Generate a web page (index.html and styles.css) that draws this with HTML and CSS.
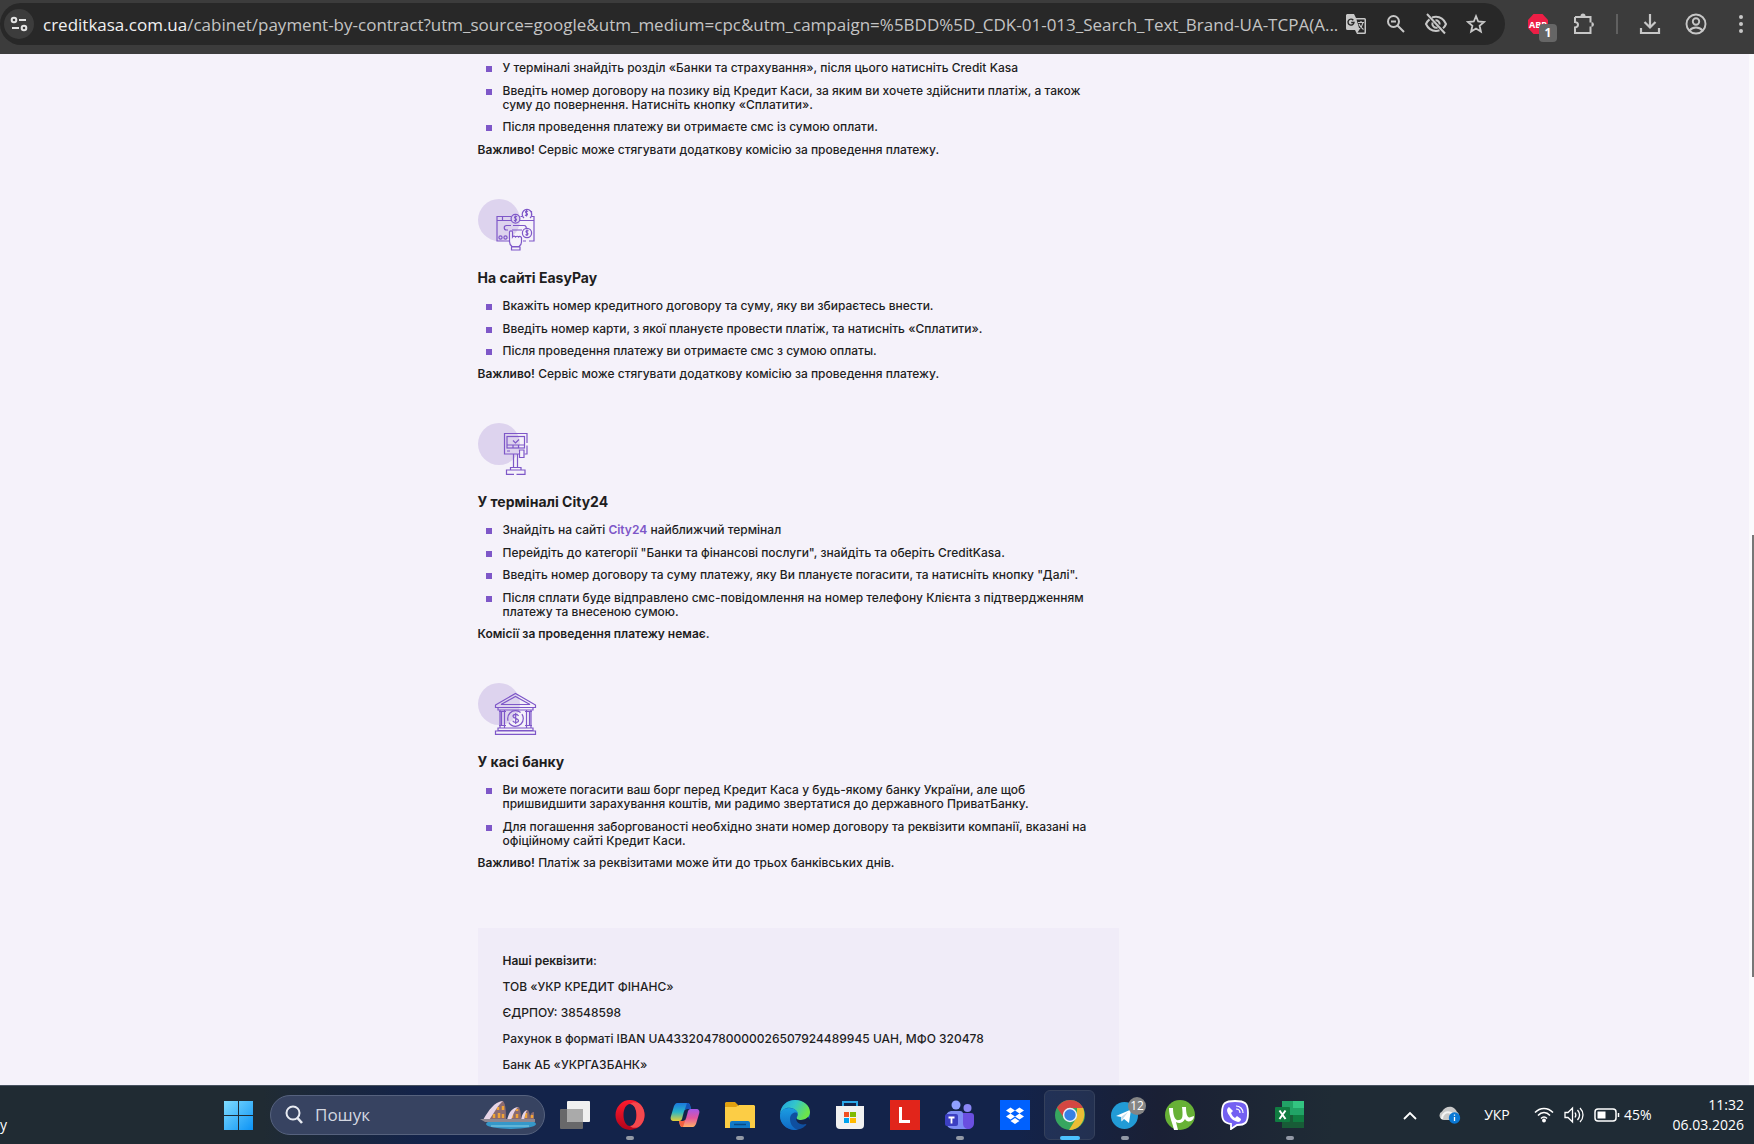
FILE: index.html
```html
<!DOCTYPE html>
<html lang="uk">
<head>
<meta charset="utf-8">
<title>CreditKasa</title>
<link rel="stylesheet" href="styles.css">
</head>
<body>
<div class="screen">
  <header class="toolbar">
    <div class="omnibox">
      <button class="site-info" aria-label="Інформація про сайт">
        <svg width="18" height="18" viewBox="0 0 18 18" fill="none" stroke="#e3e3e3" stroke-width="2"><circle cx="4" cy="5" r="2.3"/><path d="M9 5h7M2 13h7"/><circle cx="14" cy="13" r="2.3"/></svg>
      </button>
      <div class="url" role="textbox" aria-label="Адреса" tabindex="0"><span class="url-host">creditkasa.com.ua</span>/cabinet/payment-by-contract?utm_source=google&amp;utm_medium=cpc&amp;utm_campaign=%5BDD%5D_CDK-01-013_Search_Text_Brand-UA-TCPA(A...</div>
      <div class="omni-actions">
        <button class="omni-btn" aria-label="Перекласти">
          <svg width="22" height="22" viewBox="0 0 22 22"><path d="M2 1h7l2 4h8.500a1.500 1.500 0 0 1 1.500 1.500v13a1.500 1.500 0 0 1-1.500 1.500H12l-2-4H2.500A1.500 1.500 0 0 1 1 15.500V2z" fill="#c7c7c7"/><path d="M11.500 6.500h8v13h-7l2-3z" fill="#282828"/><path d="M13 9.500h6M16 8v1.500M18 9.500c-.5 3-2 5-4 6.500M14 11c1 2.500 2.500 4 4.500 5.500" stroke="#c7c7c7" stroke-width="1.200" fill="none"/><path d="M8.300 7.200A3 3 0 1 0 9 9.500H6.200" stroke="#282828" stroke-width="1.400" fill="none"/></svg>
        </button>
        <button class="omni-btn" aria-label="Масштаб">
          <svg width="20" height="20" viewBox="0 0 20 20" fill="none" stroke="#c7c7c7" stroke-width="2"><circle cx="7.500" cy="7.500" r="5.500"/><path d="M11.500 11.500 18 18M5 7.500h5"/></svg>
        </button>
        <button class="omni-btn" aria-label="Сторонні файли cookie">
          <svg width="24" height="22" viewBox="0 0 24 22" fill="none" stroke="#c7c7c7" stroke-width="2"><path d="M8 4.400C9.300 4 10.600 3.800 12 3.800c4.500 0 8 2.700 10 7.200-.7 1.700-1.700 3.100-3 4.200M15.500 17.300c-1.100.4-2.300.6-3.500.6-4.500 0-8-2.500-10-6.900.8-1.900 2-3.400 3.500-4.600M8.500 9.500a4 4 0 0 0 5 5M11.500 7.300a4 4 0 0 1 4.200 4.200M3 1l18 19.500"/></svg>
        </button>
        <button class="omni-btn" aria-label="Додати закладку">
          <svg width="20" height="20" viewBox="0 0 20 20" fill="none" stroke="#c7c7c7" stroke-width="1.800"><path d="m10 2.200 2.200 5.300 5.800.5-4.400 3.800 1.300 5.700-4.900-3-4.900 3 1.300-5.700L2 8l5.800-.5z"/></svg>
        </button>
      </div>
    </div>
    <div class="actions">
      <button class="action" aria-label="Adblock Plus">
        <svg width="22" height="22" viewBox="0 0 22 22"><path d="M6.500 1h9L21 7v8l-5.500 6h-9L1 15V7z" fill="#ed1e45"/><text x="11" y="14.500" text-anchor="middle" class="abp">ABP</text></svg>
        <span class="badge">1</span>
      </button>
      <button class="action" aria-label="Розширення">
        <svg width="22" height="22" viewBox="0 0 22 22" fill="none" stroke="#c7c7c7" stroke-width="2"><path d="M2 4h15.500v5.500M17.500 13.500V20H2v-5.500c4-.5 4-5 0-5.500V4"/><path d="M7.500 3a2.500 2.500 0 0 1 5 0zM18.500 9a2.500 2.500 0 0 1 0 5z" fill="#c7c7c7" stroke="none"/></svg>
      </button>
      <span class="divider"></span>
      <button class="action" aria-label="Завантаження">
        <svg width="22" height="22" viewBox="0 0 22 22" fill="none" stroke="#c7c7c7" stroke-width="2.200"><path d="M11 1v13M5.500 9l5.500 5.500L16.500 9M2 15v5h18v-5"/></svg>
      </button>
      <button class="action" aria-label="Профіль">
        <svg width="22" height="22" viewBox="0 0 22 22" fill="none" stroke="#c7c7c7" stroke-width="1.900"><circle cx="11" cy="11" r="9.500"/><circle cx="11" cy="8.500" r="3.200"/><path d="M4.500 17.500c3.500-4 9.500-4 13 0"/></svg>
      </button>
      <button class="action action-menu" aria-label="Меню">
        <svg width="6" height="20" viewBox="0 0 6 20" fill="#c7c7c7"><circle cx="3" cy="3" r="2"/><circle cx="3" cy="10" r="2"/><circle cx="3" cy="17" r="2"/></svg>
      </button>
    </div>
  </header>

  <div class="viewport">
    <main class="page">
      <div class="content">
        <section class="method">
          <ul class="steps">
            <li>У терміналі знайдіть розділ «Банки та страхування», після цього натисніть Credit Kasa</li>
            <li>Введіть номер договору на позику від Кредит Каси, за яким ви хочете здійснити платіж, а також<br>суму до повернення. Натисніть кнопку «Сплатити».</li>
            <li>Після проведення платежу ви отримаєте смс із сумою оплати.</li>
          </ul>
          <p class="note"><strong>Важливо!</strong> Сервіс може стягувати додаткову комісію за проведення платежу.</p>
        </section>

        <section class="method">
          <svg class="method-icon" width="60" height="52" viewBox="0 0 60 52"><circle cx="21" cy="21" r="21" fill="#ddd3ee"/><g fill="none" stroke="#7e57c8" stroke-width="1.200"><path d="M32 42H19V17.500h14M42.500 17.500h1.500M54 17.500h2V42h-5M48 42h-3M19 21.500h14M42 21.500h14M24.500 17.500v4M30 31h-1.500a2 2 0 0 1 0-4.500H33M35 26.500h11c2 0 2.500 2 2 3M34 31h10"/><circle cx="22.500" cy="38.500" r="1.600"/><circle cx="27.500" cy="38.500" r="1.600"/><circle cx="37.500" cy="19.700" r="4.400"/><path d="M46 19a4.800 4.800 0 1 1 6 0M53.500 12v5.500"/><circle cx="49" cy="34" r="4.600"/><path d="M34 47.500c-2-1.500-2.500-3-2.500-5V33c0-1.500 3-1.500 3 0v5c1-1.500 2.500-1 3 0 1-1 2.500-1 3 0 1-1 3-.5 3 1v4c0 2-1 3.500-2.500 4.500zM33.500 51v-3h8.500v3z" fill="#f5f2fa"/><path d="M39 17.800c-2-1.500-3.500.8-1.500 1.700s.5 3-1.500 1.800M37.500 16.500v6.500M50 12.500c-2-1.500-3.500.8-1.500 1.700s.5 3-1.500 1.800M48.500 11v6.500M50.500 32c-2-1.500-3.500.8-1.500 1.700s.5 3-1.500 1.800M49 30.500V37"/></g></svg>
          <h2>На сайті EasyPay</h2>
          <ul class="steps">
            <li>Вкажіть номер кредитного договору та суму, яку ви збираєтесь внести.</li>
            <li>Введіть номер карти, з якої плануєте провести платіж, та натисніть «Сплатити».</li>
            <li>Після проведення платежу ви отримаєте смс з сумою оплаты.</li>
          </ul>
          <p class="note"><strong>Важливо!</strong> Сервіс може стягувати додаткову комісію за проведення платежу.</p>
        </section>

        <section class="method">
          <svg class="method-icon" width="60" height="52" viewBox="0 0 60 52"><circle cx="21" cy="21" r="21" fill="#ddd3ee"/><g fill="none" stroke="#7e57c8" stroke-width="1.200"><path d="M41 31H26.500V10.500h22.500V20M49 22.500V31h-2.500"/><rect x="29" y="13.500" width="17.500" height="11.500"/><path d="M29 22h17.500M35 22v3M40.500 22v3M35 17.500l2.500 2.500 3.500-3.500M29 28h3"/><path d="M41.500 27h4.500v7.500h-4.500zM35.500 31v13.500M39.500 31v13.500M32.500 47v-2.500h10.500V47M36 51.300h-7.500V47H47v4.300h-8.500"/></g></svg>
          <h2>У терміналі City24</h2>
          <ul class="steps">
            <li>Знайдіть на сайті <a href="#">City24</a> найближчий термінал</li>
            <li>Перейдіть до категорії "Банки та фінансові послуги", знайдіть та оберіть CreditKasa.</li>
            <li>Введіть номер договору та суму платежу, яку Ви плануєте погасити, та натисніть кнопку "Далі".</li>
            <li>Після сплати буде відправлено смс-повідомлення на номер телефону Клієнта з підтвердженням<br>платежу та внесеною сумою.</li>
          </ul>
          <p class="note"><strong>Комісії за проведення платежу немає.</strong></p>
        </section>

        <section class="method">
          <svg class="method-icon" width="60" height="52" viewBox="0 0 60 52"><circle cx="21" cy="21" r="21" fill="#ddd3ee"/><g fill="none" stroke="#7e57c8" stroke-width="1.200"><path d="M17.500 22 37.500 10.500 57.500 22v2.500h-40zM23 21.500l14.500-8 14.500 8zM20 24.500h35v2.500H20zM22 27v18M23.500 29v13M26.500 27v18M48.500 27v18M51.500 29v13M53 27v18M21 42.500h7M47 42.500h7M21 28.500h7M47 28.500h7M20 45h35v2.500H20zM17.500 48h40v3.300h-40z"/><circle cx="37.500" cy="35.500" r="7.800" stroke-dasharray="20 2"/><path d="M40.500 33c-1-2.500-5.500-2-5.500.3s5.500 1.800 5.500 4.200-4.500 2.800-5.800.3M37.700 30v11"/></g></svg>
          <h2>У касі банку</h2>
          <ul class="steps">
            <li>Ви можете погасити ваш борг перед Кредит Каса у будь-якому банку України, але щоб<br>пришвидшити зарахування коштів, ми радимо звертатися до державного ПриватБанку.</li>
            <li>Для погашення заборгованості необхідно знати номер договору та реквізити компанії, вказані на<br>офіційному сайті Кредит Каси.</li>
          </ul>
          <p class="note"><strong>Важливо!</strong> Платіж за реквізитами може йти до трьох банківських днів.</p>
        </section>

        <section class="requisites">
          <p><strong>Наші реквізити:</strong></p>
          <p>ТОВ «УКР КРЕДИТ ФІНАНС»</p>
          <p>ЄДРПОУ: 38548598</p>
          <p>Рахунок в форматі IBAN UA433204780000026507924489945 UAH, МФО 320478</p>
          <p>Банк АБ «УКРГАЗБАНК»</p>
        </section>
      </div>
    </main>
    <div class="scrollbar"><span class="thumb"></span></div>
  </div>

  <footer class="taskbar">
    <span class="widget-text">у</span>
    <nav class="apps">
      <button class="start" aria-label="Пуск">
        <svg width="29" height="29" viewBox="0 0 29 29"><defs><linearGradient id="win" x1="0" y1="0" x2="1" y2="1"><stop offset="0" stop-color="#7fdcff"/><stop offset="1" stop-color="#0c93f5"/></linearGradient></defs><path d="M0 0h14v14H0zM15 0h14v14H15zM0 15h14v14H0zM15 15h14v14H15z" fill="url(#win)"/></svg>
      </button>
      <label class="search">
        <svg width="18" height="20" viewBox="0 0 18 20" fill="none" stroke="#e8ebf2" stroke-width="2"><circle cx="8" cy="8" r="6.500"/><path d="m12.500 13 4.500 5" stroke-width="2.600"/></svg>
        <input type="search" placeholder="Пошук" aria-label="Пошук">
        <svg width="58" height="30" viewBox="0 0 56 30"><ellipse cx="31" cy="24" rx="25" ry="5" fill="#3598c9"/><path d="M11 26h38" stroke="#8bd0e5" stroke-width="1"/><path d="M5 20C10 8 17 1 23 1c3 3 3 12 3 19z" fill="#8a6a70"/><path d="M28 20c2-9 6-13 11-13 2 4 2 9 2 13zM42 20c1-7 3-10 6-10 2 3 2 7 2 10zM50 20c0-5 1-8 4-8v8z" fill="#8a6a70"/><path d="M14 18v-4M19 18v-5M23 18v-4M18 10v-3M23 10V6M32 18v-4M37 18v-4M37 11V9M46 18v-5M52 18v-3" stroke="#f0a436" stroke-width="2.500"/><path d="M3 20C9 10 14 2 23 1c-6 5-8 11-14 19zM27 20c2-8 5-12 11-13-4 4-5 8-7 13zM41 20c1-6 3-9 6-10-2 4-2 6-3 10z" fill="#e6d4e6"/><path d="M0 19h55v3H5z" fill="#8e8790"/></svg>
      </label>
      <button class="app" aria-label="Перегляд завдань">
        <svg width="30" height="30" viewBox="0 0 30 30"><rect y="9" width="23" height="20" rx="1" fill="#68686a"/><rect x="7" y="1" width="23" height="21" rx="1" fill="#f0f0f0"/><path d="M7 9h16v13H8a1 1 0 0 1-1-1z" fill="#aaa"/></svg>
      </button>
      <button class="app running" aria-label="Opera">
        <svg width="30" height="30" viewBox="0 0 30 30"><defs><linearGradient id="op" x1="0" y1="0" x2="0" y2="1"><stop offset="0" stop-color="#ff1b2d"/><stop offset="1" stop-color="#b3041b"/></linearGradient></defs><path fill-rule="evenodd" d="M15 0a14.500 15 0 1 0 0 30 14.500 15 0 1 0 0-30zm0 4c4 0 6.500 5 6.500 11S19 26 15 26 8.500 21 8.500 15 11 4 15 4z" fill="url(#op)"/><path d="M15 26c4 0 6.500-5 6.500-11S19 4 15 4c2-2 5-2.500 8.500-1 8 5 8 19 0 24-3.500 1.500-6.500 1-8.500-1z" fill="#f4484e"/></svg>
      </button>
      <button class="app" aria-label="Copilot">
        <svg width="30" height="28" viewBox="0 0 30 28"><defs><linearGradient id="c1" x1="0" y1="0" x2="0" y2="1"><stop offset="0" stop-color="#1b78dd"/><stop offset=".5" stop-color="#28b5c9"/><stop offset="1" stop-color="#e6cf35"/></linearGradient><linearGradient id="c2" x1="0" y1="0" x2="0" y2="1"><stop offset="0" stop-color="#a457e8"/><stop offset=".5" stop-color="#e3559e"/><stop offset="1" stop-color="#ffb066"/></linearGradient></defs><path d="M7 2h10c3 0 3 2 4 6h-4c-3 0-3 3-4 6l-1 4c-1 2-2 2-4 2H4c-3 0-4-2-3-5L4 5c1-2 2-3 3-3z" fill="url(#c1)"/><path d="M17 2c3 0 3 2 4 6h-4c-2 0-3 1-3 3z" fill="#1554b8"/><path d="M23 26H13c-3 0-3-2-4-6h4c3 0 3-3 4-6l1-4c1-2 2-2 4-2h4c3 0 4 2 3 5l-3 10c-1 2-2 3-3 3z" fill="url(#c2)"/><path d="M13 26c-3 0-3-2-4-6h4c2 0 3-1 3-3z" fill="#f06040"/></svg>
      </button>
      <button class="app running" aria-label="Провідник">
        <svg width="30" height="28" viewBox="0 0 30 28"><path d="M1 1h9l3 3v4H0V2z" fill="#e0a010"/><path d="M0 6h11l3-2h15l1 1v22H0z" fill="#fccd45"/><path d="M5 27v-5a2 2 0 0 1 2-2h16a2 2 0 0 1 2 2v5z" fill="#1179c9"/><path d="M9 23.500h12" stroke="#0a4a86" stroke-width="1.500"/></svg>
      </button>
      <button class="app" aria-label="Edge">
        <svg width="30" height="30" viewBox="0 0 30 30"><defs><linearGradient id="e1" x1="0" y1="0" x2="1" y2=".4"><stop offset="0" stop-color="#1f9fe0"/><stop offset=".5" stop-color="#33c5cc"/><stop offset="1" stop-color="#6be54a"/></linearGradient><linearGradient id="e2" x1="0" y1="0" x2="0" y2="1"><stop offset="0" stop-color="#1b9de2"/><stop offset="1" stop-color="#1068c4"/></linearGradient></defs><circle cx="15" cy="15" r="15" fill="#0f4fa0"/><path d="M0 14C1 5 7 0 15 0c9 0 15 6 15 12 0 5-4 8-9 8-4 0-5-1-4-3 2-3 0-8-6-9C6 7 2 10 0 14z" fill="url(#e1)"/><path d="M0 16c0-5 4-8 9-8 5 0 9 3 9 6-2-3-8-1-8 5 0 5 3 9 8 11C8 31 0 25 0 16z" fill="url(#e2)"/><path d="M17 17c-1 2 0 3 4 3 3 0 5-1 7-3l2 3-3 5-1-1c-6 2-12-3-9-7z" fill="#14234a"/></svg>
      </button>
      <button class="app" aria-label="Microsoft Store">
        <svg width="30" height="30" viewBox="0 0 30 30"><path d="M8 7V2h14v5" fill="none" stroke="#2ba7e8" stroke-width="2"/><path d="M1 6h28v19a4 4 0 0 1-4 4H5a4 4 0 0 1-4-4z" fill="#f1f1f1"/><path d="M9 12h5v5H9z" fill="#f25022"/><path d="M15 12h6v5h-6z" fill="#7fba00"/><path d="M9 18h5v5H9z" fill="#00a4ef"/><path d="M15 18h6v5h-6z" fill="#ffb900"/></svg>
      </button>
      <button class="app" aria-label="L">
        <svg width="30" height="30" viewBox="0 0 30 30"><path d="M0 0h30v30H0z" fill="#e1251b"/><path d="M10.500 7v14.500H20" fill="none" stroke="#fff" stroke-width="3"/></svg>
      </button>
      <button class="app running" aria-label="Teams">
        <svg width="30" height="30" viewBox="0 0 30 30"><circle cx="11" cy="5" r="4.500" fill="#8fa0ff"/><circle cx="22.500" cy="8" r="4" fill="#8a86f5"/><path d="M17 13h9a3 3 0 0 1 3 3v7c0 4-3 6-6 6h-6z" fill="#6a4fe0"/><path d="M7 11h8a3 3 0 0 1 3 3v9c0 3 1 5 4 6H9c-5 0-8-3-8-8v-4c0-4 3-6 6-6z" fill="#7d8df5"/><rect y="14" width="13" height="12" rx="2" fill="#3c3fc2"/><path d="M3.500 17.500h6M6.500 17.500v6" stroke="#fff" stroke-width="1.800"/></svg>
      </button>
      <button class="app" aria-label="Dropbox">
        <svg width="30" height="30" viewBox="0 0 30 30"><path d="M0 0h30v30H0z" fill="#0061fe"/><path d="m10.500 7.500 4.500 3-4.500 3-4.500-3zM19.500 7.500l4.500 3-4.500 3-4.500-3zM10.500 13.500l4.500 3-4.500 3-4.500-3zM19.500 13.500l4.500 3-4.500 3-4.500-3zM15 18l4.500 3-4.500 3-4.500-3z" fill="#fff"/></svg>
      </button>
      <button class="app running active" aria-label="Chrome">
        <svg width="30" height="30" viewBox="0 0 30 30"><circle cx="15" cy="15" r="15" fill="#2da94f"/><path d="M15 0c6 0 11 3 13 8H15l-6 10L2 7.500C5 3 10 0 15 0z" fill="#e33b2e"/><path d="M28.200 8C32 18 26 30 14 30l8-13V8z" fill="#fcc31e"/><circle cx="15" cy="15" r="7.200" fill="#fff"/><circle cx="15" cy="15" r="5.700" fill="#2b7de9"/></svg>
      </button>
      <button class="app running" aria-label="Telegram">
        <svg width="27" height="27" viewBox="0 0 27 27"><circle cx="13.500" cy="13.500" r="13.500" fill="#229bd6"/><path d="m5 14 15-6.500-2 13.500-5-4-2.500 2.500-.5-4.500z" fill="#fff"/><path d="m10 15 7-5-4.500 6-2 3z" fill="#c3dcec"/></svg>
        <span class="count">12</span>
      </button>
      <button class="app" aria-label="uTorrent">
        <svg width="30" height="30" viewBox="0 0 30 30"><circle cx="15" cy="15" r="15" fill="#67b136"/><path d="M4 8h4c0 8 2 13 6 12 4 0 4-5 3-13h4c0 6 1 12 5 10l3-1c0 2-1 4-3 5-3 1-5 0-6-2-2 4-6 5-9 3l2 8h-4C8 24 4 17 4 8z" fill="#fff"/></svg>
      </button>
      <button class="app" aria-label="Viber">
        <svg width="30" height="30" viewBox="0 0 30 30"><path d="M15 1c10 0 13 2 13 12s-3 12-11 12l-6 4v-5C4 23 2 20 2 13 2 3 5 1 15 1z" fill="#7360f2" stroke="#fff" stroke-width="1.800"/><path d="M9 7c-3 2-2 5 0 8 2 4 5 6 9 7 2 0 3-2 3-3l-4-3-2 2c-2-1-3-3-4-5l2-2z" fill="#fff"/><path d="M16 6c4 0 7 3 7 7M16 9c3 0 4 2 4 4" stroke="#fff" fill="none" stroke-width="1.200"/></svg>
      </button>
      <button class="app running" aria-label="Excel">
        <svg width="30" height="30" viewBox="0 0 30 30"><path d="M7 1h11v14H7z" fill="#21a366"/><path d="M18 1h11v7H18z" fill="#33c481"/><path d="M18 8h11v7H18z" fill="#21a366"/><path d="M7 15h22v13H7z" fill="#185c37"/><path d="M18 15h11v7H18z" fill="#107c41"/><rect y="7" width="15" height="15" rx="1" fill="#107c41"/><path d="m4.500 10.500 6 8.500M10.500 10.500l-6 8.500" stroke="#fff" stroke-width="2"/></svg>
      </button>
    </nav>
    <div class="tray">
      <button class="tray-btn chevron" aria-label="Приховані піктограми"><svg width="14" height="9" viewBox="0 0 14 9" fill="none" stroke="#fff" stroke-width="1.800"><path d="m1 8 6-6 6 6"/></svg></button>
      <button class="tray-btn" aria-label="OneDrive"><svg width="22" height="18" viewBox="0 0 22 18"><path d="M5 14a4.500 4.500 0 0 1-2-8.500C5 2 9 0 13 1c3 1 4 3 5 5 2 1 3 4 1 8z" fill="#c9c9c9"/><path d="M3 13C3 8 7 5 12 7l4 3" stroke="#f3f3f3" stroke-width="2" fill="none"/><circle cx="15.500" cy="12" r="5.700" fill="#0a78d4"/><path d="M15.500 11v4M15.500 8.500v1.200" stroke="#fff" stroke-width="1.300"/></svg></button>
      <button class="tray-btn lang">УКР</button>
      <button class="tray-btn status" aria-label="Мережа, звук, батарея">
        <svg width="20" height="16" viewBox="0 0 20 16" fill="none" stroke="#fff" stroke-width="1.500"><path d="M1 5.500c5-5.500 13-5.500 18 0M4 8.500c3.500-4 8.500-4 12 0M7 11.500c1.800-2 4.200-2 6 0"/><circle cx="10" cy="13.500" r="1.200" fill="#fff"/></svg>
        <svg width="20" height="18" viewBox="0 0 20 18" fill="none" stroke="#fff" stroke-width="1.300"><path d="M1 6.500h3L8.500 2v14L4 11.500H1zM11 6.500c1 1.500 1 3.500 0 5M13.500 4c2.500 3 2.500 7 0 10M16 2c4 4 4 10 0 14"/></svg>
        <svg width="26" height="14" viewBox="0 0 26 14" fill="none" stroke="#fff" stroke-width="1.500"><rect x="1" y="1" width="21" height="12" rx="3"/><path d="M24.500 5v4"/><rect x="3.500" y="3.500" width="8" height="7" fill="#fff" stroke="none"/></svg>
        <span>45%</span>
      </button>
      <div class="clock"><time>11:32</time><time>06.03.2026</time></div>
    </div>
  </footer>
</div>
</body>
</html>
```
FILE: styles.css
```css
* { box-sizing: border-box; }

body {
  margin: 0;
  font-family: Inter, "Noto Sans", sans-serif;
  color: #1e1e1e;
}

button {
  display: flex;
  align-items: center;
  justify-content: center;
  padding: 0;
  border: 0;
  background: none;
  color: inherit;
  font: inherit;
}

.screen {
  display: flex;
  flex-direction: column;
  height: 100vh;
  overflow: hidden;
}

/* Browser toolbar */
.toolbar {
  display: flex;
  align-items: center;
  flex: none;
  height: 54px;
  padding-bottom: 6px;
  background: #3c3c3c;
}

.omnibox {
  display: flex;
  align-items: center;
  flex: 1;
  min-width: 0;
  height: 42px;
  padding: 0 16px 0 4px;
  border-radius: 21px;
  background: #282828;
}

.site-info {
  flex: none;
  width: 30px;
  height: 30px;
  border-radius: 15px;
  background: #3c3c3c;
}

.url {
  flex: 1;
  min-width: 0;
  margin-left: 9px;
  padding-top: 2px;
  overflow: hidden;
  color: #c4c4c4;
  font: 17px/24px "Open Sans", "Noto Sans", sans-serif;
  white-space: nowrap;
}

.url-host { color: #f0f0f0; }

.omni-actions {
  display: flex;
  flex: none;
  gap: 14px;
}

.omni-btn {
  width: 26px;
  height: 40px;
}

.actions {
  display: flex;
  align-items: center;
  flex: none;
  margin-left: 10px;
}

.action {
  position: relative;
  width: 46px;
  height: 40px;
}

.action-menu {
  justify-content: flex-end;
  width: 35px;
  padding-right: 10px;
}

.abp {
  fill: #fff;
  font: bold 9px "Open Sans", sans-serif;
}

.badge {
  position: absolute;
  top: 20px;
  left: 24px;
  width: 18px;
  border-radius: 4px;
  background: #666;
  color: #fff;
  font: bold 12px/18px "Open Sans", sans-serif;
}

.divider {
  width: 2px;
  height: 20px;
  margin: 0 9px;
  background: #606060;
}

/* Page */
.viewport {
  display: flex;
  flex: 1;
  min-height: 0;
  background: #f5f2fa;
}

.page {
  flex: 1;
  overflow: hidden;
  padding: 7px 24px 0;
}

.content {
  display: flex;
  flex-direction: column;
  gap: 42px;
  max-width: 794px;
  margin: 0 auto;
  padding-right: 153px;
  font-size: 12px;
  font-weight: 500;
  line-height: 14px;
}

.method-icon {
  display: block;
  margin-bottom: 18px;
}

h2 {
  margin: 0 0 12px;
  font-size: 14px;
  line-height: 18px;
  font-weight: 700;
}

p { margin: 0; }

strong { font-weight: 600; }

.steps {
  margin: 0;
  padding: 0;
  list-style: none;
}

.steps li {
  position: relative;
  margin-bottom: 8px;
  padding-left: 25px;
  white-space: nowrap;
}

.steps li:nth-child(odd) { margin-bottom: 9px; }

.steps li::before {
  content: "";
  position: absolute;
  top: 5px;
  left: 8px;
  width: 6px;
  height: 6px;
  background: #7e57c8;
}

.steps a {
  color: #7e57c8;
  font-weight: 600;
  text-decoration: none;
}

.requisites {
  display: flex;
  flex-direction: column;
  gap: 12px;
  margin-top: 16px;
  padding: 26px 25px 40px;
  background: #f0ecf8;
}

.scrollbar {
  flex: none;
  width: 5px;
  padding: 481px 0 0 3px;
  background: #fbfafd;
}

.thumb {
  display: block;
  height: 442px;
  background: #777;
}

/* Taskbar */
.taskbar {
  display: flex;
  flex: none;
  height: 59px;
  border-top: 1px solid #47515f;
  background: linear-gradient(90deg, #202b33 0, #202b33 15%, #13234a 24%, #13234a 58%, #1a2035 66%, #1f2b35 76%, #1f2b35 100%);
  color: #fff;
  font-family: "Open Sans", "Noto Sans", sans-serif;
}

.widget-text {
  flex: none;
  width: 224px;
  padding-top: 29px;
  font-size: 14px;
  line-height: 20px;
}

.apps {
  display: flex;
  align-items: center;
  flex: none;
}

.start {
  width: 29px;
  margin-right: 17px;
}

.search {
  display: flex;
  align-items: center;
  width: 275px;
  height: 40px;
  margin-right: 2px;
  padding: 0 7px 0 14px;
  border: 1px solid #56627e;
  border-radius: 20px;
  background: #374361;
}

.search input {
  flex: 1;
  min-width: 0;
  margin: 0 0 0 12px;
  padding: 0;
  border: 0;
  background: none;
  color: #fff;
  font: 17px/24px "Open Sans", "Noto Sans", sans-serif;
}

.search input::placeholder { color: #d3d7e0; }

.app {
  position: relative;
  width: 55px;
  height: 50px;
}

.running::after {
  content: "";
  position: absolute;
  bottom: 0;
  left: 24px;
  width: 8px;
  height: 4px;
  border-radius: 2px;
  background: #9298a5;
}

.active::before {
  content: "";
  position: absolute;
  inset: 0 2px;
  border: 1px solid #35415c;
  border-radius: 6px;
  background: #7896c822;
}

.active::after {
  left: 18px;
  width: 20px;
  background: #4cc2ff;
}

.count {
  position: absolute;
  top: 7px;
  left: 31px;
  width: 18px;
  border-radius: 9px;
  background: #858585;
  font-size: 12px;
  line-height: 18px;
}

.tray {
  display: flex;
  align-items: center;
  margin-left: auto;
  padding-right: 10px;
  font-size: 14px;
  line-height: 20px;
}

.tray-btn {
  width: 40px;
  height: 40px;
}

.lang {
  width: 54px;
  font-size: 14px;
}

.status {
  gap: 10px;
  width: auto;
  margin: 0 21px 0 10px;
}

.status span {
  margin-left: -6px;
  font-size: 14px;
}

.clock {
  display: flex;
  flex-direction: column;
  align-items: flex-end;
}
```
